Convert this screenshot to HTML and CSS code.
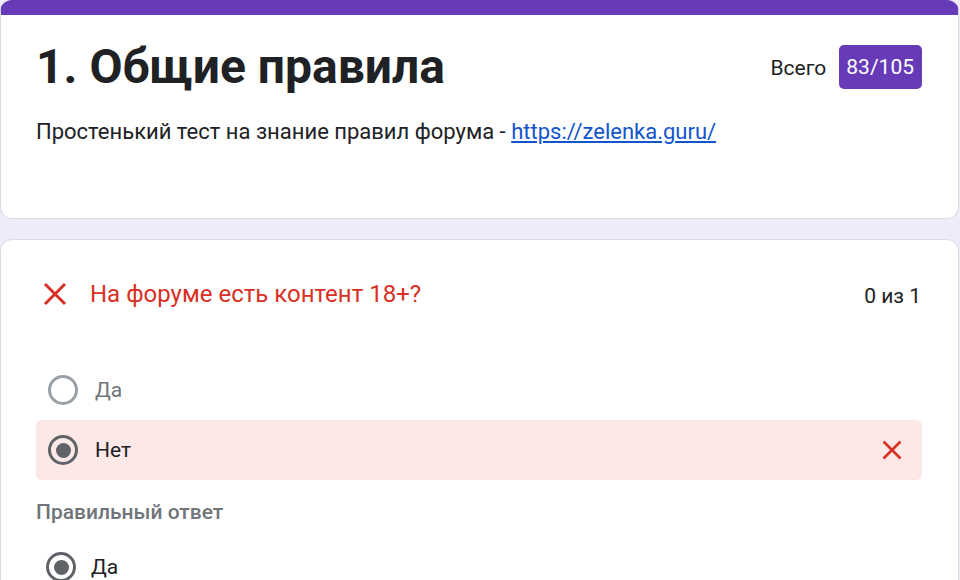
FILE: index.html
```html
<!DOCTYPE html>
<html lang="ru">
<head>
    <meta charset="UTF-8">
    <meta name="viewport" content="width=device-width, initial-scale=1.0">
    <title>1. Общие правила</title>
    <link rel="stylesheet" href="styles.css">
</head>
<body>

<div class="form-wrap">
    <div class="card header-card">
        <div class="header-row">
            <h1 class="form-title">1. Общие правила</h1>
            <div class="total">
                <span class="total-label">Всего</span>
                <span class="total-badge">83/105</span>
            </div>
        </div>
        <p class="form-desc">Простенький тест на знание правил форума - <a href="#">https://zelenka.guru/</a></p>
    </div>

    <div class="card question-card">
        <div class="question-row">
            <svg class="icon-wrong" width="24" height="24" viewBox="0 0 24 24">
                <path d="M2 2 L22 22 M22 2 L2 22" stroke="#d93025" stroke-width="3" fill="none"/>
            </svg>
            <span class="question-text">На форуме есть контент 18+?</span>
            <span class="question-score">0 из 1</span>
        </div>

        <div class="options">
            <div class="option">
                <span class="radio"></span>
                <span class="option-label muted">Да</span>
            </div>
            <div class="option option-wrong">
                <span class="radio checked"></span>
                <span class="option-label">Нет</span>
                <svg class="icon-wrong-small" width="20" height="20" viewBox="0 0 20 20">
                    <path d="M1.5 1.5 L18.5 18.5 M18.5 1.5 L1.5 18.5" stroke="#d93025" stroke-width="2.6" fill="none"/>
                </svg>
            </div>
        </div>

        <div class="correct-title">Правильный ответ</div>
        <div class="option option-correct">
            <span class="radio checked"></span>
            <span class="option-label">Да</span>
        </div>
    </div>
</div>

</body>
</html>
```

FILE: styles.css
```css
body {
    margin: 0;
    background-color: #f0ebf8;
    font-family: Roboto, "Noto Sans", Arial, sans-serif;
    color: #202124;
}

.form-wrap {
    width: 959px;
    display: flex;
    flex-direction: column;
    gap: 20px;
}

.card {
    background-color: #fff;
    border: 1px solid #dadce0;
    border-radius: 12px;
    box-sizing: border-box;
}

.header-card {
    border-top: 15px solid #673ab7;
    padding: 23px 36px 71px 35px;
}

.header-row {
    display: flex;
    align-items: center;
    justify-content: space-between;
}

.form-title {
    margin: 0;
    font-size: 48px;
    line-height: 58px;
    font-weight: 700;
    color: #202124;
}

.total {
    display: flex;
    align-items: center;
    gap: 13px;
    font-size: 21px;
}

.total-label {
    margin-top: 1px;
}

.total-badge {
    background-color: #673ab7;
    color: #fff;
    border-radius: 5px;
    padding: 0 8px 0 7px;
    line-height: 44px;
}

.form-desc {
    margin: 21px 0 0 0;
    font-size: 22px;
    line-height: 30px;
}

.form-desc a {
    color: #1155cc;
}

.question-card {
    padding: 36px 36px 40px 35px;
}

.question-row {
    display: flex;
    align-items: center;
    height: 36px;
}

.icon-wrong {
    margin-left: 7px;
    margin-right: 23px;
}

.question-text {
    font-size: 24px;
    color: #d93025;
    flex: 1;
}

.question-score {
    font-size: 21px;
    margin-top: 4px;
    margin-right: 1px;
}

.options {
    margin-top: 48px;
}

.option {
    display: flex;
    align-items: center;
    height: 60px;
    padding-left: 12px;
    border-radius: 6px;
}

.option-wrong {
    background-color: #fce8e6;
}

.radio {
    width: 30px;
    height: 30px;
    border: 3px solid #9aa0a6;
    border-radius: 50%;
    box-sizing: border-box;
    display: flex;
    align-items: center;
    justify-content: center;
    flex-shrink: 0;
}

.radio.checked {
    border-color: #5f6368;
}

.radio.checked::after {
    content: "";
    width: 15px;
    height: 15px;
    border-radius: 50%;
    background-color: #5f6368;
}

.option-label {
    font-size: 21px;
    margin-left: 17px;
    flex: 1;
}

.option-label.muted {
    color: #70757a;
}

.icon-wrong-small {
    margin-right: 20px;
}

.correct-title {
    margin-top: 17px;
    font-size: 21px;
    line-height: 30px;
    font-weight: 500;
    color: #70757a;
}

.option-correct {
    margin-top: 10px;
    padding-left: 10px;
}

.option-correct .option-label {
    margin-left: 15px;
}
```
